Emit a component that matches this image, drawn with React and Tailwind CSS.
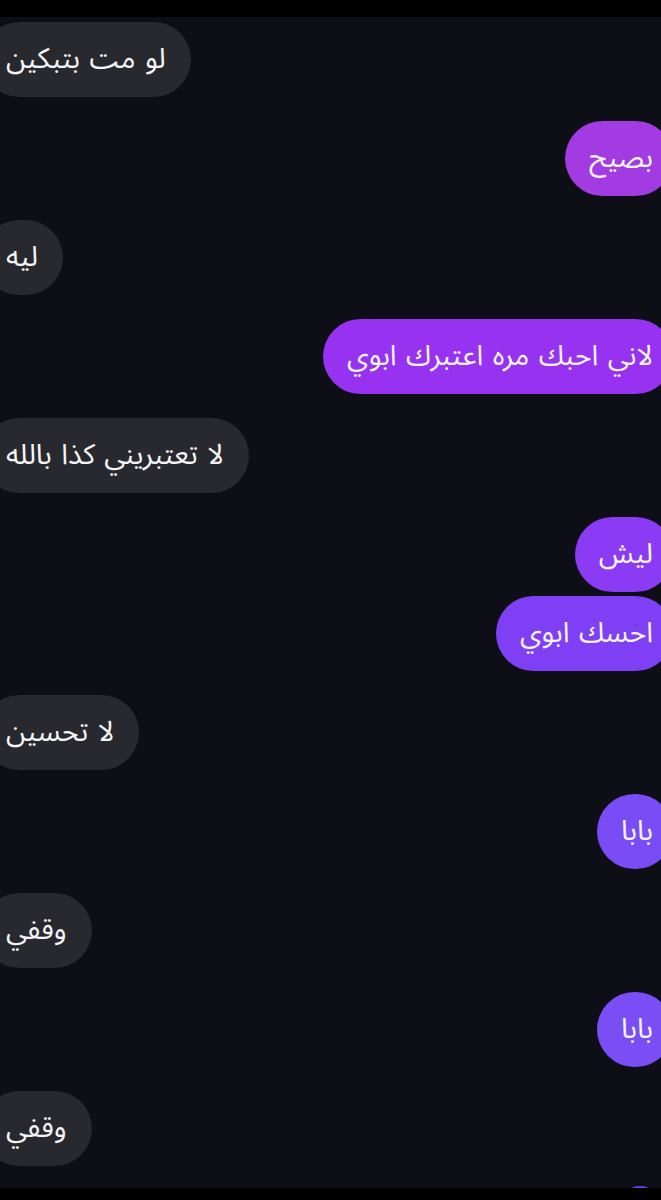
import React from 'react';

const messages = [
  { from: 'them', text: 'لو مت بتبكين' },
  { from: 'me', text: 'بصيح', color: 'bg-[#a23ce2]' },
  { from: 'them', text: 'ليه' },
  { from: 'me', text: 'لاني احبك مره اعتبرك ابوي', color: 'bg-[#9632f0]' },
  { from: 'them', text: 'لا تعتبريني كذا بالله' },
  { from: 'me', text: 'ليش', color: 'bg-[#8a3bf3]', grouped: true },
  { from: 'me', text: 'احسك ابوي', color: 'bg-[#7f3ff4]' },
  { from: 'them', text: 'لا تحسين' },
  { from: 'me', text: 'بابا', color: 'bg-[#7a4cf5]' },
  { from: 'them', text: 'وقفي' },
  { from: 'me', text: 'بابا', color: 'bg-[#7a4ef5]' },
  { from: 'them', text: 'وقفي' },
];

const Bubble = ({ msg }) => {
  const mine = msg.from === 'me';
  return (
    <div className={mine ? 'flex justify-end mr-[-12px]' : 'flex justify-start ml-[-18px]'}>
      <div
        dir="rtl"
        className={
          'h-[75px] rounded-full flex items-center text-[28.5px] text-[#f4f4f6] whitespace-nowrap [word-spacing:2px] ' +
          (mine ? 'pl-[24px] pr-[20px] ' + msg.color : 'pl-[24px] pr-[25px] bg-[#28292e]')
        }
      >
        {msg.text}
      </div>
    </div>
  );
};

export default function App() {
  return (
    <div
      className="w-[661px] h-[1200px] bg-black flex flex-col overflow-hidden"
      style={{ fontFamily: '"Noto Sans Arabic", "DejaVu Sans", sans-serif' }}
    >
      <div className="h-[17px] shrink-0 bg-black" />
      <div className="h-[1171px] shrink-0 bg-[#0e0f16] overflow-hidden pt-[5px] flex flex-col">
        {messages.map((m, i) => (
          <div key={i} className={m.grouped ? 'mb-[4px]' : 'mb-[24px]'}>
            <Bubble msg={m} />
          </div>
        ))}
        <div className="flex justify-end mr-[3px] -mt-[4px]">
          <div className="h-[75px] w-[36px] rounded-full bg-[#6a44e0]" />
        </div>
      </div>
      <div className="h-[12px] shrink-0 bg-black" />
    </div>
  );
}
